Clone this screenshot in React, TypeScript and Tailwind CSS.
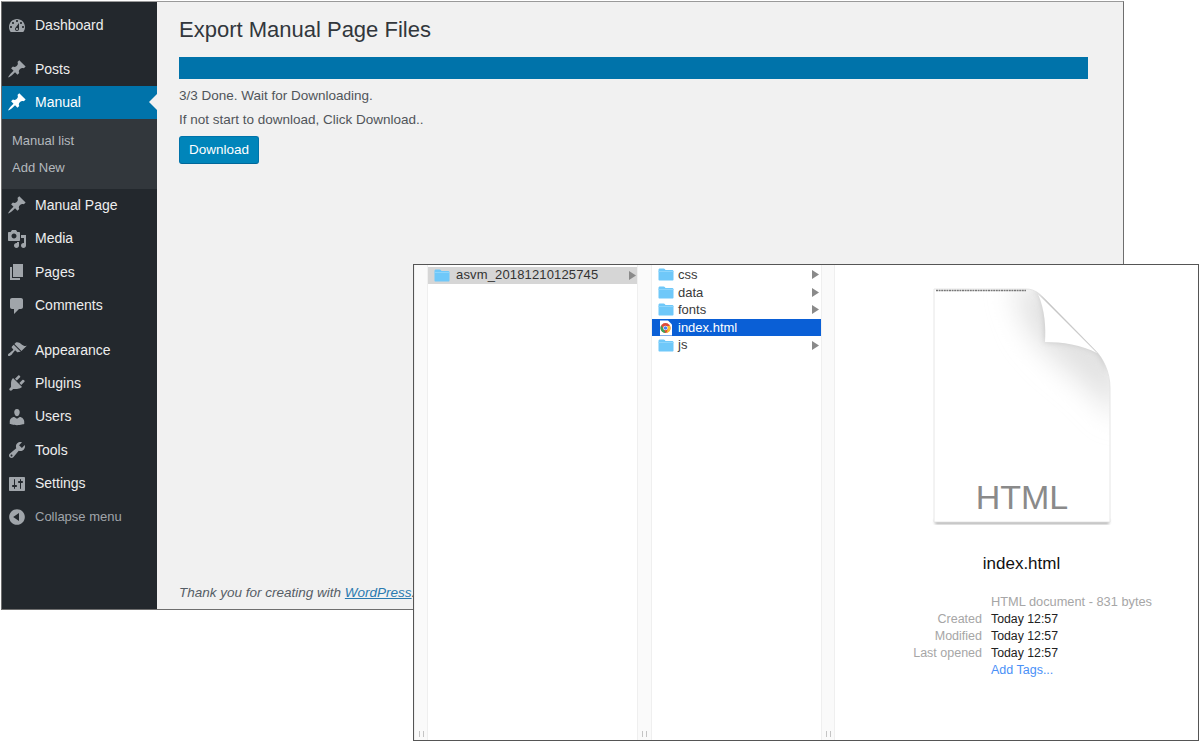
import React from "react";

const P: Record<string, string> = {
  dashboard: "M3.76 16h12.48c1.1-1.37 1.76-3.11 1.76-5 0-4.42-3.58-8-8-8s-8 3.58-8 8c0 1.89.66 3.63 1.76 5zM10 4c.55 0 1 .45 1 1s-.45 1-1 1-1-.45-1-1 .45-1 1-1zM6 6c.55 0 1 .45 1 1s-.45 1-1 1-1-.45-1-1 .45-1 1-1zm8 0c.55 0 1 .45 1 1s-.45 1-1 1-1-.45-1-1 .45-1 1-1zm-5.37 5.55L12 7v6c0 1.1-.9 2-2 2s-2-.9-2-2c0-.57.24-1.08.63-1.45zM4 10c.55 0 1 .45 1 1s-.45 1-1 1-1-.45-1-1 .45-1 1-1zm12 0c.55 0 1 .45 1 1s-.45 1-1 1-1-.45-1-1 .45-1 1-1zm-5 3c0-.55-.45-1-1-1s-1 .45-1 1 .45 1 1 1 1-.45 1-1z",
  pin: "M10.44 3.02l1.82-1.82 6.36 6.35-1.83 1.82c-1.05-.68-2.48-.57-3.41.36l-.75.75c-.92.93-1.04 2.35-.35 3.41l-1.83 1.82-2.41-2.41-2.8 2.79c-.42.42-3.38 2.71-3.8 2.29s1.86-3.39 2.28-3.81l2.79-2.79L4.1 9.36l1.83-1.82c1.05.69 2.48.57 3.4-.36l.75-.75c.93-.92 1.05-2.35.36-3.41z",
  media: "M13 11V4c0-.55-.45-1-1-1h-1.67L9 1H5L3.67 3H2c-.55 0-1 .45-1 1v7c0 .55.45 1 1 1h10c.55 0 1-.45 1-1zM7 4.5c1.38 0 2.5 1.12 2.5 2.5S8.38 9.5 7 9.5 4.5 8.38 4.5 7 5.62 4.5 7 4.5zM14 6h5v10.5c0 1.38-1.12 2.5-2.5 2.5S14 17.88 14 16.5s1.12-2.5 2.5-2.5c.17 0 .34.02.5.05V9h-3V6zm-4 8.05V13h2v3.5c0 1.38-1.12 2.5-2.5 2.5S7 17.88 7 16.5 8.12 14 9.5 14c.17 0 .34.02.5.05z",
  pages: "M6 15V2h10v13H6zm-1 1h8v2H3V5h2v11z",
  comments: "M5 2h9c1.1 0 2 .9 2 2v7c0 1.1-.9 2-2 2h-2l-5 5v-5H5c-1.1 0-2-.9-2-2V4c0-1.1.9-2 2-2z",
  appearance: "M14.48 11.06L7.41 3.99l1.5-1.5c.5-.56 2.3-.47 3.51.32 1.21.8 1.43 1.28 2.91 2.1 1.18.64 2.45 1.26 4.45.85zm-.71.71L6.7 4.7 4.93 6.47c-.39.39-.39 1.02 0 1.41l1.06 1.06c.39.39.39 1.03 0 1.42-.6.6-1.43 1.11-2.21 1.69-.35.26-.7.53-1.01.84C1.43 13.23.4 14.91 1.2 15.7c.79.8 2.48-.23 3.82-1.57.31-.31.58-.66.84-1.01.58-.78 1.09-1.61 1.69-2.21.39-.39 1.02-.39 1.41 0l1.06 1.06c.39.39 1.02.39 1.41 0z",
  plugins: "M13.11 4.36L9.87 7.6 8 5.73l3.24-3.24c.35-.34 1.05-.2 1.56.32.52.51.66 1.21.31 1.55zm-8 1.77l.91-1.12 9.01 9.01-1.19.84c-.71.71-2.63 1.16-3.82 1.16H6.14L4.9 17.26c-.59.59-1.54.59-2.12 0-.59-.58-.59-1.53 0-2.12l1.24-1.24v-3.88c0-1.13.4-3.19 1.09-3.89zm7.26 3.97l3.24-3.24c.34-.35 1.04-.21 1.55.31.52.51.66 1.21.31 1.55l-3.24 3.25z",
  users: "M10 9.25c-2.27 0-2.73-3.44-2.73-3.44C7 4.02 7.82 2 9.97 2c2.16 0 2.98 2.02 2.71 3.81 0 0-.41 3.44-2.68 3.44zm0 2.57L12.72 10c2.39 0 4.52 2.33 4.52 4.53v2.49s-3.65 1.13-7.24 1.13c-3.65 0-7.24-1.13-7.24-1.13v-2.49c0-2.25 1.94-4.48 4.47-4.48z",
  tools: "M16.68 9.77c-1.34 1.34-3.3 1.67-4.95.99l-5.41 6.52c-.99.99-2.59.99-3.58 0s-.99-2.59 0-3.57l6.52-5.42c-.68-1.65-.35-3.61.99-4.95 1.28-1.28 3.12-1.62 4.72-1.06l-2.89 2.89 2.82 2.82 2.86-2.87c.53 1.58.18 3.39-1.08 4.65zM3.81 16.21c.4.39 1.04.39 1.43 0 .4-.4.4-1.04 0-1.43-.39-.4-1.03-.4-1.43 0-.39.39-.39 1.03 0 1.43z",
  settings: "M18 16V4c0-.55-.45-1-1-1H3c-.55 0-1 .45-1 1v12c0 .55.45 1 1 1h14c.55 0 1-.45 1-1zM8 11h1c.55 0 1 .45 1 1s-.45 1-1 1H8v1.5c0 .28-.22.5-.5.5s-.5-.22-.5-.5V13H6c-.55 0-1-.45-1-1s.45-1 1-1h1V5.5c0-.28.22-.5.5-.5s.5.22.5.5V11zm5-2h-1c-.55 0-1-.45-1-1s.45-1 1-1h1V5.5c0-.28.22-.5.5-.5s.5.22.5.5V7h1c.55 0 1 .45 1 1s-.45 1-1 1h-1v5.5c0 .28-.22.5-.5.5s-.5-.22-.5-.5V9z",
  collapse: "M10 2.16c4.33 0 7.84 3.51 7.84 7.84s-3.51 7.84-7.84 7.84S2.16 14.33 2.16 10 5.71 2.16 10 2.16zm2 11.72V6.12L6.18 9.97z",
};

function Dash({ name, color = "#a0a5aa" }: { name: string; color?: string }) {
  return (
    <svg viewBox="0 0 20 20" width="20" height="20" className="shrink-0">
      <path d={P[name]} fill={color} />
    </svg>
  );
}

function Item({ icon, label, mt }: { icon: string; label: string; mt?: string }) {
  return (
    <div className={`flex h-[33.4px] items-center gap-2 pl-[5px] text-[14px] text-[#eeeeee] ${mt ?? ""}`}>
      <Dash name={icon} />
      <span>{label}</span>
    </div>
  );
}

function Folder() {
  return (
    <svg viewBox="0 0 16 13" width="16" height="13" className="shrink-0">
      <path d="M0.5 2C0.5 1 1 .5 2 .5h3.6c.6 0 .9.2 1.2.6l.7.9H14c1 0 1.5.5 1.5 1.5V11.5c0 .7-.4 1-1 1H1.500c-.6 0-1-.3-1-1z" fill="#6fc8f9" />
      <rect x="0.5" y="3" width="15" height="1" fill="#8ed5fb" />
    </svg>
  );
}

function Arrow() {
  return (
    <svg viewBox="0 0 7 9" width="7" height="9" className="shrink-0">
      <path d="M0 0L7 4.500L0 9z" fill="#8a8a8a" />
    </svg>
  );
}

function Row({ label, selected }: { label: string; selected?: boolean }) {
  return (
    <div className={`flex h-[17.6px] items-center pl-[6px] pr-[2px] text-[13px] ${selected ? "bg-[#0a5fd6] text-white" : "text-[#3a3a3a]"}`}>
      {selected ? (
        <svg viewBox="0 0 16 16" width="16" height="16" className="shrink-0">
          <path d="M2 0.500h8l4 4V15.500H2z" fill="#ffffff" />
          <circle cx="7.500" cy="8" r="5" fill="#dd4b39" />
          <path d="M7.500 13a5 5 0 0 1-4.300-7.500L6 9.500z" fill="#3aa757" />
          <path d="M12.500 8a5 5 0 0 1-4 4.900L10 8.500 9 6h3z" fill="#fbc02d" />
          <circle cx="7.500" cy="8" r="2.300" fill="#ffffff" />
          <circle cx="7.500" cy="8" r="1.700" fill="#4285f4" />
        </svg>
      ) : (
        <Folder />
      )}
      <span className="ml-[4px] flex-1">{label}</span>
      {!selected && <Arrow />}
    </div>
  );
}

function Gutter({ w = "w-[15px]" }: { w?: string }) {
  return (
    <div className={`flex ${w} shrink-0 items-end justify-center gap-[3px] border-x border-[#efefef] bg-[#fafafa] pb-[3px]`}>
      <div className="h-[6px] w-px bg-[#c4c4c4]" />
      <div className="h-[6px] w-px bg-[#c4c4c4]" />
    </div>
  );
}

function Meta({ label, value }: { label: string; value: string }) {
  return (
    <>
      <div className="text-right text-[#a6a6a6]">{label}</div>
      <div className="text-[12.300px] text-[#222222]">{value}</div>
    </>
  );
}

function DocIcon() {
  const page = "M934 289L1026 289C1035 289 1040 294 1046 300L1095 350C1103 358 1110 372 1110 388L1110 522L934 522Z";
  return (
    <div className="relative h-[245px] w-[190px]">
      <svg viewBox="929 284 190 245" width="190" height="245" className="absolute left-0 top-0">
        <defs>
          <filter id="b6" x="-60%" y="-60%" width="220%" height="220%"><feGaussianBlur stdDeviation="14" /></filter>
          <filter id="b2" x="-20%" y="-20%" width="140%" height="140%"><feGaussianBlur stdDeviation="3" /></filter>
          <filter id="b1" x="-10%" y="-10%" width="120%" height="120%"><feGaussianBlur stdDeviation="1.500" /></filter>
          <clipPath id="pg"><path d={page} /></clipPath>
        </defs>
        <rect x="935" y="519" width="174" height="5" fill="#a8a8a8" filter="url(#b1)" />
        <path d={page} fill="#ffffff" stroke="#e6e6e6" strokeWidth="1" />
        <g clipPath="url(#pg)">
          <path d="M1012 286L1050 286L1120 350L1120 420L1085 385L1050 356L1028 330Z" fill="#e2e2e2" filter="url(#b6)" />
          <path d="M1032 289L1040 296C1045 310 1045 328 1045 342C1062 342 1082 344 1096 352C1100 356 1104 362 1107 372L1110 330L1050 296Z" fill="#c6c6c6" filter="url(#b2)" />
        </g>
        <path d="M1038 294L1097 353C1082 345 1062 342 1045 342C1046 328 1045 310 1038 294Z" fill="#ffffff" />
        <path d="M1038 294L1097 353" stroke="#e4e4e4" strokeWidth="1" fill="none" />
        <line x1="936" y1="290.500" x2="1026" y2="290.500" stroke="#777777" strokeWidth="1.500" strokeDasharray="2 0.600" />
      </svg>
      <div className="absolute left-0 top-[191px] w-full pr-[4px] text-center text-[34px] leading-[44px] text-[#8a8a8a]">HTML</div>
    </div>
  );
}

export default function App() {
  return (
    <div className="relative h-[742px] w-[1200px] overflow-hidden bg-white [font-family:'Liberation_Sans',Arial,sans-serif]">
      {/* WordPress window */}
      <div className="absolute left-px top-px flex h-[609px] w-[1123px] border border-[#6e6e6e] border-t-[#9a9a9a]">
        <aside className="flex w-[155px] shrink-0 flex-col bg-[#23282d] pt-[7px]">
          <Item icon="dashboard" label="Dashboard" />
          <Item icon="pin" label="Posts" mt="mt-[10px]" />
          <div className="relative flex h-[33px] items-center gap-2 bg-[#0073aa] pl-[5px] text-[14px] text-white">
            <Dash name="pin" color="#ffffff" />
            <span>Manual</span>
            <svg viewBox="0 0 8 16" width="8" height="16" className="absolute right-0 top-[8px]">
              <path d="M8 0L0 8L8 16z" fill="#f1f1f1" />
            </svg>
          </div>
          <div className="flex h-[70px] flex-col bg-[#32373c] pb-[7px] pl-[10px] pt-[8px] text-[13px] text-[#b4b9be]">
            <div className="flex h-[27.500px] items-center">Manual list</div>
            <div className="flex h-[27.500px] items-center">Add New</div>
          </div>
          <Item icon="pin" label="Manual Page" />
          <Item icon="media" label="Media" />
          <Item icon="pages" label="Pages" />
          <Item icon="comments" label="Comments" />
          <Item icon="appearance" label="Appearance" mt="mt-[11px]" />
          <Item icon="plugins" label="Plugins" />
          <Item icon="users" label="Users" />
          <Item icon="tools" label="Tools" />
          <Item icon="settings" label="Settings" />
          <div className="flex h-[33.400px] items-center gap-2 pl-[5px] text-[13px] text-[#a0a5aa]">
            <Dash name="collapse" />
            <span>Collapse menu</span>
          </div>
        </aside>
        <main className="flex flex-1 flex-col bg-[#f1f1f1] pb-[8px] pl-[22px] pr-[35px] pt-[13px] text-[13.500px] text-[#50555a]">
          <h1 className="h-[30px] text-[22px] font-normal leading-[30px] text-[#32373c]">Export Manual Page Files</h1>
          <div className="mt-[12px] h-[22px] bg-[#0073aa]" />
          <p className="mt-[8px] h-[16px] leading-[17px]">3/3 Done. Wait for Downloading.</p>
          <p className="mt-[8px] h-[16px] leading-[17px]">If not start to download, Click Download..</p>
          <button className="mt-[9px] h-[28px] w-[80px] rounded-[3px] border border-[#0073aa] border-b-[#006799] bg-[#0085ba] pt-px text-[13.500px] text-white">Download</button>
          <p className="mt-auto h-[16px] italic leading-[16px] text-[#555d66]">
            Thank you for creating with <a className="text-[#2a7ab0] underline">WordPress</a>.
          </p>
        </main>
      </div>

      {/* Finder window */}
      <div className="absolute left-[413px] top-[264px] flex h-[477px] w-[786px] border border-[#555555] bg-white">
        <Gutter w="w-[14px]" />
        <div className="w-[209px] shrink-0 pt-[1.500px]">
          <div className="flex h-[17px] items-center bg-[#d6d6d6] pl-[6px] pr-px text-[13px] text-[#333333]">
            <Folder />
            <span className="ml-[6px] flex-1 tracking-[0.15px]">asvm_20181210125745</span>
            <Arrow />
          </div>
        </div>
        <Gutter />
        <div className="w-[169px] shrink-0 pt-px">
          <Row label="css" />
          <Row label="data" />
          <Row label="fonts" />
          <Row label="index.html" selected />
          <Row label="js" />
        </div>
        <Gutter w="w-[14px]" />
        <div className="flex flex-1 flex-col pt-[19px]">
          <div className="pl-[94px]">
            <DocIcon />
          </div>
          <div className="mt-[25px] pl-[10px] text-center text-[17px] leading-[20px] text-[#111111]">index.html</div>
          <div className="mt-[20px] grid grid-cols-[147px_auto] gap-x-[9px] text-[12.500px] leading-[16.900px]">
            <div />
            <div className="text-[12.800px] text-[#a6a6a6]">HTML document - 831 bytes</div>
            <Meta label="Created" value="Today 12:57" />
            <Meta label="Modified" value="Today 12:57" />
            <Meta label="Last opened" value="Today 12:57" />
            <div />
            <div className="text-[#4a90f7]">Add Tags...</div>
          </div>
        </div>
      </div>
    </div>
  );
}
